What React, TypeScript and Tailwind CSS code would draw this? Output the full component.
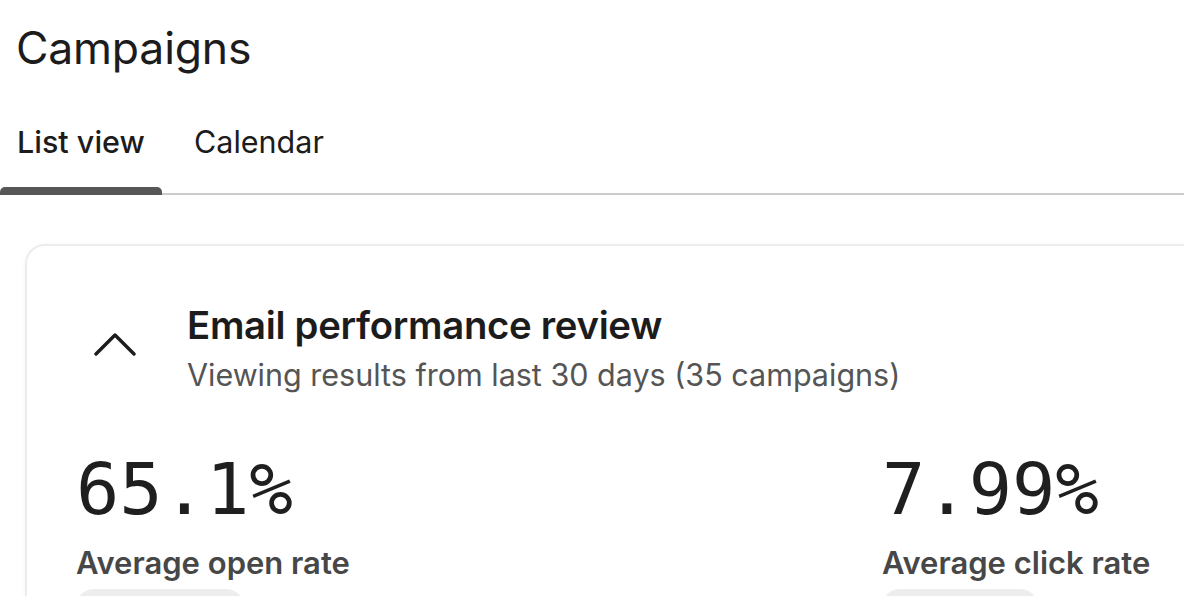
const stats = [
  { value: "65.1%", label: "Average open rate", pill: "w-[168px]" },
  { value: "7.99%", label: "Average click rate", pill: "w-[156px]" },
];

export default function App() {
  return (
    <div className="w-[1184px] h-[596px] overflow-hidden bg-white text-[#1c1c1c] font-['Inter',sans-serif]">
      <h1 className="pl-[16px] pt-[20px] text-[44.5px] leading-[56px] font-normal tracking-[-0.2px]">Campaigns</h1>

      <nav className="mt-[50px] flex border-b-2 border-[#cbcbcb]">
        <div className="relative w-[162px] pl-[17px] pb-[34px]">
          <span className="text-[30.5px] leading-[32px] font-medium">List view</span>
          <div className="absolute left-0 right-0 -bottom-[2px] h-[8px] rounded-t-[5px] bg-[#575757]" />
        </div>
        <div className="pl-[32px] pb-[34px]">
          <span className="text-[30.5px] leading-[32px]">Calendar</span>
        </div>
      </nav>

      <section className="ml-[25px] mt-[49px] w-[1700px] rounded-[20px] border-2 border-[#ececec] shadow-[0_2px_6px_rgba(0,0,0,0.04)] pl-[49px] pt-[55px]">
        <div className="flex items-start">
          <svg className="mt-[32px] ml-[18px] w-[42px] h-[24px] text-[#1c1c1c]" viewBox="0 0 42 24" fill="none">
            <polyline points="2,21 21,2 40,21" stroke="currentColor" strokeWidth="3.4" strokeLinecap="round" strokeLinejoin="round" />
          </svg>
          <div className="ml-[51px]">
            <h2 className="text-[38.3px] leading-[48px] font-semibold tracking-[-0.3px]">Email performance review</h2>
            <p className="mt-[4px] text-[30.5px] leading-[44px] text-[#555555]">Viewing results from last 30 days (35 campaigns)</p>
          </div>
        </div>

        <div className="mt-[52px] grid grid-cols-[806px_806px]">
          {stats.map((s) => (
            <div key={s.label}>
              <div className="font-['DejaVu_Sans_Mono',monospace] text-[72px] leading-[80px] text-[#1f1f1f]">{s.value}</div>
              <div className="mt-[16px] text-[31px] leading-[36px] font-semibold text-[#474747]">{s.label}</div>
              <div className={`mt-[8px] h-[40px] rounded-[18px] bg-[#ededed] ${s.pill}`} />
            </div>
          ))}
        </div>
      </section>
    </div>
  );
}
